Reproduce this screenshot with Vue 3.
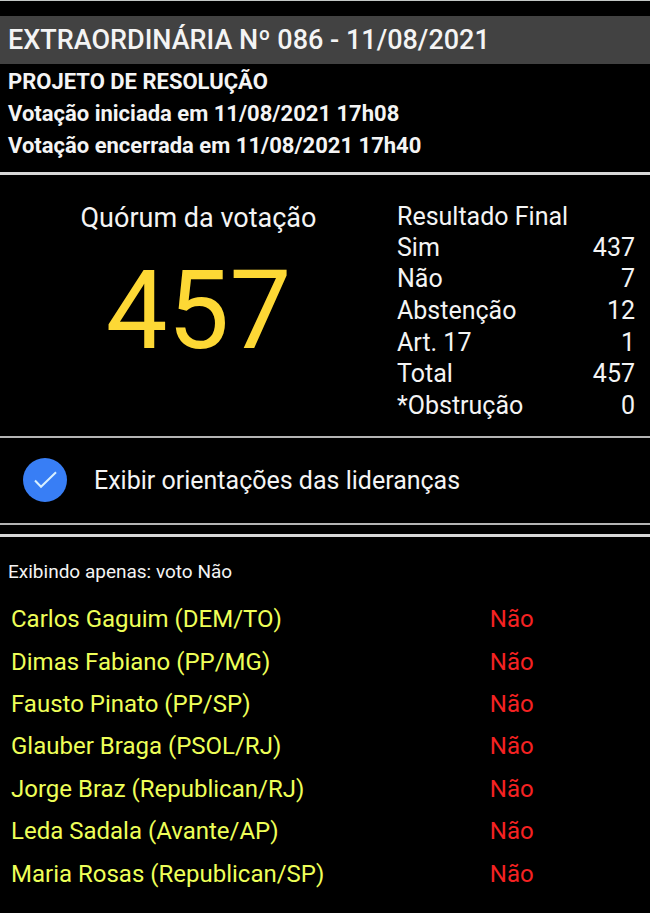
<script setup>
import { ref } from 'vue'

const showGuidance = ref(true)

const results = [
  { label: 'Sim', value: 437 },
  { label: 'Não', value: 7 },
  { label: 'Abstenção', value: 12 },
  { label: 'Art. 17', value: 1 },
  { label: 'Total', value: 457 },
  { label: '*Obstrução', value: 0 },
]

const votes = [
  { name: 'Carlos Gaguim (DEM/TO)', vote: 'Não' },
  { name: 'Dimas Fabiano (PP/MG)', vote: 'Não' },
  { name: 'Fausto Pinato (PP/SP)', vote: 'Não' },
  { name: 'Glauber Braga (PSOL/RJ)', vote: 'Não' },
  { name: 'Jorge Braz (Republican/RJ)', vote: 'Não' },
  { name: 'Leda Sadala (Avante/AP)', vote: 'Não' },
  { name: 'Maria Rosas (Republican/SP)', vote: 'Não' },
]
</script>

<template>
  <main class="page">
    <h1 class="title">EXTRAORDINÁRIA Nº 086 - 11/08/2021</h1>

    <header class="info">
      <p>PROJETO DE RESOLUÇÃO</p>
      <p>Votação iniciada em 11/08/2021 17h08</p>
      <p>Votação encerrada em 11/08/2021 17h40</p>
    </header>

    <section class="summary">
      <div class="quorum">
        <h2 class="quorum-label">Quórum da votação</h2>
        <p class="quorum-value">457</p>
      </div>
      <table class="results">
        <thead>
          <tr>
            <th colspan="2" scope="colgroup">Resultado Final</th>
          </tr>
        </thead>
        <tbody>
          <tr v-for="row in results" :key="row.label">
            <th scope="row">{{ row.label }}</th>
            <td>{{ row.value }}</td>
          </tr>
        </tbody>
      </table>
    </section>

    <label class="toggle" for="guidance">
      <input id="guidance" v-model="showGuidance" class="toggle-input" type="checkbox" />
      <span class="toggle-mark">
        <svg v-if="showGuidance" viewBox="0 0 44 44" aria-hidden="true">
          <path d="M12 22.5 L18 28.8 L33 14.2" />
        </svg>
      </span>
      <span>Exibir orientações das lideranças</span>
    </label>

    <section class="list">
      <p class="filter">Exibindo apenas: voto Não</p>
      <table class="votes">
        <tbody>
          <tr v-for="item in votes" :key="item.name">
            <th scope="row">{{ item.name }}</th>
            <td>{{ item.vote }}</td>
          </tr>
        </tbody>
      </table>
    </section>
  </main>
</template>

<style>
body {
  margin: 0;
  background: #000;
}
</style>

<style scoped>
.page {
  box-sizing: border-box;
  min-height: 100vh;
  padding-top: 15px;
  border-top: 1px solid #c4c8c6;
  background: #000;
  color: #f4f4f4;
  font-family: Roboto, "Liberation Sans", sans-serif;
}

h1,
h2,
p {
  margin: 0;
  font-weight: 400;
}

.title {
  padding: 0 8px;
  background: #424242;
  font-size: 27px;
  font-weight: 500;
  line-height: 48px;
}

.info {
  padding: 2px 8px 10px;
  border-bottom: 3px solid #d8d8d8;
}

.info p {
  font-size: 22px;
  font-weight: 700;
  line-height: 32px;
}

.summary {
  display: grid;
  grid-template-columns: 397fr 253fr;
  padding: 27px 0 14px;
  border-bottom: 2px solid #b4b4b4;
}

.quorum {
  text-align: center;
}

.quorum-label {
  font-size: 27px;
  line-height: 32px;
}

.quorum-value {
  padding-top: 13px;
  color: #fdd835;
  font-size: 110px;
  line-height: 128px;
}

table {
  width: 100%;
  border-collapse: collapse;
}

th,
td {
  padding: 0;
  font-weight: 400;
  text-align: left;
}

.results {
  height: 220px;
  font-size: 25px;
  line-height: 30px;
}

.results td {
  padding-right: 15px;
  text-align: right;
}

.toggle {
  display: flex;
  align-items: center;
  gap: 27px;
  padding: 20px 23px 21px;
  border-bottom: 2px solid #b4b4b4;
  font-size: 25px;
  cursor: pointer;
}

.toggle-input {
  position: absolute;
  opacity: 0;
}

.toggle-mark {
  display: flex;
  width: 44px;
  height: 44px;
  border-radius: 50%;
  background: #387ef5;
}

.toggle-mark svg {
  width: 44px;
  height: 44px;
  fill: none;
  stroke: #d8f0ff;
  stroke-width: 2;
}

.toggle-input:focus-visible + .toggle-mark {
  outline: 2px solid #fff;
}

.list {
  margin-top: 9px;
  padding: 22px 8px 16px;
  border-top: 3px solid #d8d8d8;
}

.filter {
  font-size: 19px;
  line-height: 26px;
}

.votes {
  height: 297px;
  margin-top: 13px;
  font-size: 24px;
  line-height: 40px;
}

.votes th {
  width: 76%;
  padding-left: 3px;
  color: #eeff58;
}

.votes td {
  color: #f52222;
}
</style>
